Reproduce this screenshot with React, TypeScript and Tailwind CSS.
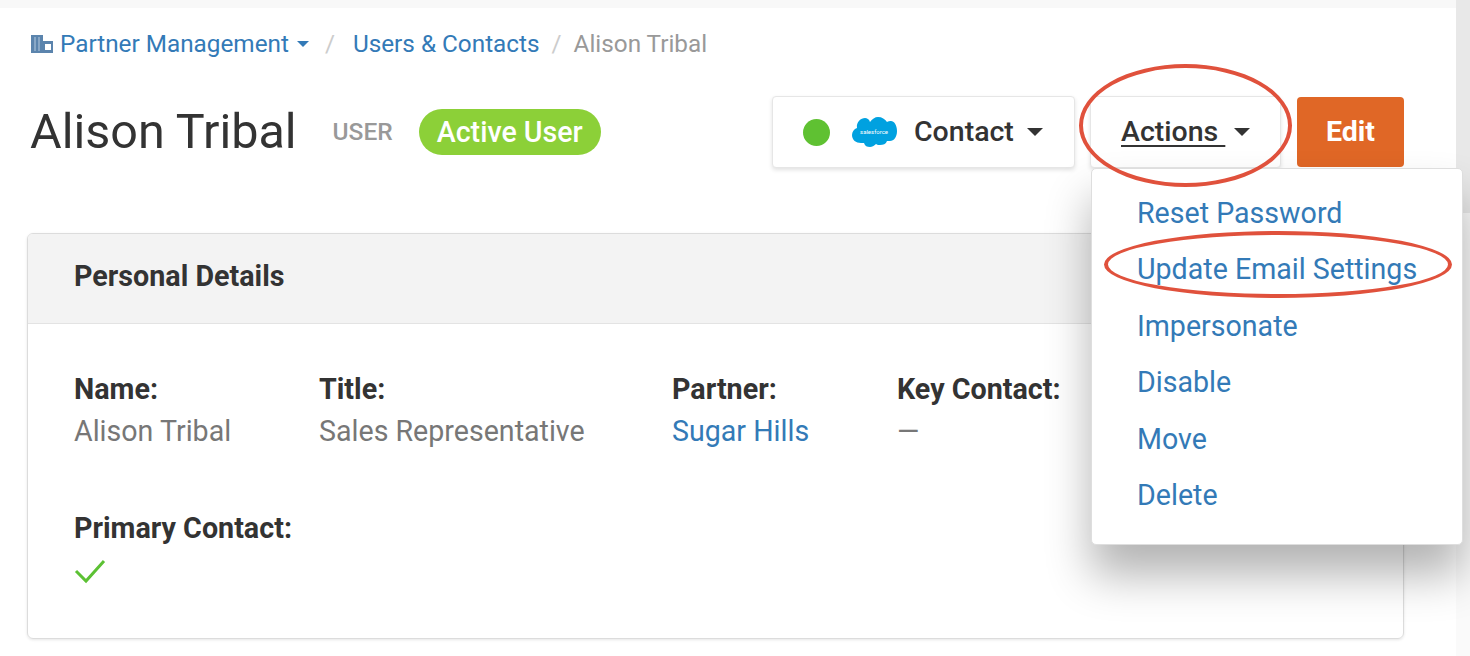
import React from "react";

const Caret = ({ className = "" }: { className?: string }) => (
  <svg viewBox="0 0 12 6" className={className} aria-hidden="true">
    <path d="M0 0h12L6 6z" fill="currentColor" />
  </svg>
);

const Field = ({ label, value, link, className }: { label: string; value: string; link?: boolean; className: string }) => (
  <div className={className}>
    <div className="text-[28.7px] leading-[38px] font-bold text-[#333] whitespace-nowrap">{label}</div>
    <div className={`text-[28.6px] leading-[46px] whitespace-nowrap ${link ? "text-[#337ab7]" : "text-[#777]"}`}>{value}</div>
  </div>
);

export default function App() {
  return (
    <div className="relative w-[1470px] h-[656px] overflow-hidden bg-white font-['Roboto',sans-serif]">
      <div className="h-2 bg-[#f8f8f8]" />
      <div className="absolute right-0 top-0 w-[14px] h-[213px] bg-[#e8e8e8]" />
      <div className="absolute right-0 top-[213px] w-[14px] h-[443px] bg-[#fafafa]" />
      <div className="pl-7 pr-[66px]">
        <nav className="flex items-center h-[28px] mt-[22px] text-[24.3px] whitespace-nowrap">
          <svg viewBox="0 0 22 18" className="w-[22px] h-[18px] ml-[3px] mr-[7px] text-[#5b84ad]" aria-hidden="true">
            <path d="M0 0h12v18H0z" fill="currentColor" />
            <path d="M12 6h10v12H12zM14 9v6h6V9z" fill="currentColor" fillRule="evenodd" />
            <path d="M4 2v14M8 2v14" stroke="#b7cbe0" strokeWidth="1" />
          </svg>
          <span className="text-[#337ab7]">Partner Management</span>
          <Caret className="w-[12px] h-[6px] ml-2 text-[#337ab7]" />
          <span className="text-[#ccc] ml-4">/</span>
          <span className="text-[#337ab7] ml-[18px]">Users &amp; Contacts</span>
          <span className="text-[#ccc] ml-3">/</span>
          <span className="text-[#999] ml-3">Alison Tribal</span>
        </nav>

        <header className="flex items-center justify-between mt-[38px] h-[72px]">
          <div className="flex items-center">
            <h1 className="text-[48.5px] leading-[56px] text-[#333] ml-[2px] whitespace-nowrap">Alison Tribal</h1>
            <span className="ml-9 text-[24.5px] font-medium text-[#999]">USER</span>
            <span className="ml-[26px] h-[46px] px-[18px] rounded-[23px] bg-[#8cd038] text-white text-[28.6px] font-medium flex items-center whitespace-nowrap">Active User</span>
          </div>
          <div className="flex items-center">
            <div className="w-[303px] h-[72px] rounded-[4px] border border-[#e6e6e6] shadow-[0_2px_4px_rgba(0,0,0,0.12)] flex items-center pl-[30px] bg-white">
              <span className="w-[27px] h-[27px] rounded-full bg-[#5fc132]" />
              <svg viewBox="0 0 46 32" className="w-[46px] h-[32px] ml-[21px]" aria-hidden="true">
                <path d="M19 6c2-3 5-5 8-5 4 0 7 2 9 5 1-1 3-1 4-1 3 0 6 4 6 10s-3 10-7 10h-3c-1 3-4 4-7 4-1 0-3 0-4-1-2 2-4 3-6 3-3 0-5-1-6-4h-3c-5 0-9-3-9-8 0-3 2-6 5-7-1-6 4-10 8-10 2 0 4 1 5 4z" fill="#00a1e0" />
                <text x="23" y="18" textAnchor="middle" fontSize="6" fill="#ffffff" fontFamily="Roboto, sans-serif">salesforce</text>
              </svg>
              <span className="ml-[17px] text-[28.5px] font-medium text-[#333]">Contact</span>
              <Caret className="w-[16px] h-[8px] ml-[13px] text-[#333]" />
            </div>
            <div className="relative ml-[15px] w-[191px] h-[72px] rounded-[4px] border border-[#e6e6e6] shadow-[0_2px_4px_rgba(0,0,0,0.12)] flex items-center pl-[30px] bg-white">
              <span className="text-[28.5px] font-medium text-[#333] underline underline-offset-[4px] whitespace-pre">Actions </span>
              <Caret className="w-[16px] h-[8px] ml-[9px] text-[#333]" />
              <div className="absolute left-0 top-[71px] z-10 w-[372px] h-[377px] rounded-[5px] bg-white border border-[#dedede] shadow-[0_30px_45px_rgba(0,0,0,0.3)] pl-[45px] pt-[16px] text-[28.6px] leading-[56.400px] text-[#337ab7] whitespace-nowrap">
                <div>Reset Password</div>
                <div>Update Email Settings</div>
                <div>Impersonate</div>
                <div>Disable</div>
                <div>Move</div>
                <div>Delete</div>
              </div>
            </div>
            <div className="ml-4 w-[107px] h-[70px] rounded-[4px] bg-[#e06726] text-white text-[28.5px] font-bold flex items-center justify-center">Edit</div>
          </div>
        </header>

        <section className="mt-[65px] -ml-px h-[406px] rounded-[6px] border border-[#dcdcdc] shadow-[0_1px_3px_rgba(0,0,0,0.1)] overflow-hidden">
          <div className="h-[90px] pb-1 bg-[#f3f3f3] border-b border-[#e3e3e3] flex items-center pl-[46px] text-[28.7px] font-bold text-[#333]">Personal Details</div>
          <div className="pl-[46px] pt-[46px]">
            <div className="flex">
              <Field className="w-[245px]" label="Name:" value="Alison Tribal" />
              <Field className="w-[353px]" label="Title:" value="Sales Representative" />
              <Field className="w-[225px]" label="Partner:" value="Sugar Hills" link />
              <Field className="w-[200px]" label="Key Contact:" value="—" />
            </div>
            <div className="mt-[55px] text-[28.7px] leading-[38px] font-bold text-[#333]">Primary Contact:</div>
            <svg viewBox="0 0 32 26" className="w-[32px] h-[26px] mt-[11px]" aria-hidden="true">
              <path d="M2 13l10 10L30 3" fill="none" stroke="#5cc134" strokeWidth="3" />
            </svg>
          </div>
        </section>
      </div>

      <div className="absolute left-[1079px] top-[64px] w-[213px] h-[123px] rounded-[50%] border-[4px] border-[#e0513c] z-20" />
      <div className="absolute left-[1104px] top-[231px] w-[348px] h-[67px] rounded-[50%] border-[4px] border-[#e0513c] z-20" />
    </div>
  );
}
